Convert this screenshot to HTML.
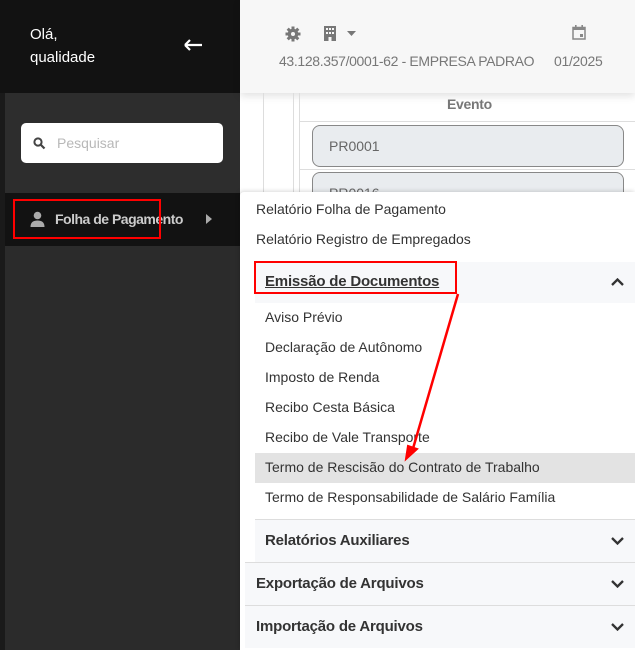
<!DOCTYPE html>
<html><head><meta charset="utf-8"><style>
*{margin:0;padding:0;box-sizing:border-box}
body{width:635px;height:650px;overflow:hidden;font-family:"Liberation Sans",sans-serif;background:#fff;position:relative}
.a{position:absolute}
.t{position:absolute;white-space:nowrap}
</style></head><body>
<div class="a" style="left:0;top:0;width:240px;height:650px;background:#1a1a1a"></div>
<div class="a" style="left:0;top:0;width:240px;height:93px;background:#121212"></div>
<div class="a" style="left:5px;top:93px;width:235px;height:100px;background:#2d2d2d"></div>
<div class="a" style="left:5px;top:193px;width:235px;height:53px;background:#121212"></div>
<div class="a" style="left:5px;top:246px;width:235px;height:404px;background:#2b2b2b"></div>
<div class="t" style="left:30px;top:23px;color:#fff;font-size:15px;line-height:23px">Olá,<br>qualidade</div>
<svg class="a" style="left:183px;top:38px" width="20" height="14" viewBox="0 0 20 14"><path d="M2 7H19M2 7L7 2M2 7L7 12" stroke="#fff" stroke-width="2.2" fill="none"/></svg>
<div class="a" style="left:21px;top:123px;width:202px;height:40px;background:#fff;border-radius:5px"></div>
<svg class="a" style="left:33px;top:137px" width="13" height="13" viewBox="0 0 13 13"><circle cx="5" cy="5" r="3.6" stroke="#444" stroke-width="2" fill="none"/><path d="M8 8L11.5 11.5" stroke="#444" stroke-width="2.2"/></svg>
<div class="t" style="left:57px;top:135px;color:#b8b8b8;font-size:14px">Pesquisar</div>
<svg class="a" style="left:30px;top:211px" width="15" height="16" viewBox="0 0 15 16"><circle cx="7.5" cy="4.5" r="3.8" fill="#aaa"/><path d="M0.5 16C0.5 11 3.5 9.5 7.5 9.5S14.5 11 14.5 16Z" fill="#aaa"/></svg>
<div class="t" style="left:55px;top:211px;color:#ccc;font-size:14px;font-weight:bold;letter-spacing:-0.5px">Folha de Pagamento</div>
<svg class="a" style="left:206px;top:214px" width="6" height="10"><path d="M0 0L6 5L0 10Z" fill="#aaa"/></svg>
<div class="a" style="left:13px;top:199px;width:148px;height:40px;border:2.5px solid #f00"></div>
<div class="a" style="left:240px;top:0;width:395px;height:93px;background:#f7f7f7;box-shadow:0 3px 8px rgba(0,0,0,.12)"></div>
<svg class="a" style="left:285px;top:26px" width="16" height="16" viewBox="0 0 16 16"><circle cx="8" cy="8" r="5.3" fill="#777"/><g stroke="#777" stroke-width="3"><path d="M8 0.5V15.5M0.5 8H15.5M2.7 2.7L13.3 13.3M13.3 2.7L2.7 13.3"/></g><circle cx="8" cy="8" r="2" fill="#f7f7f7"/></svg>
<svg class="a" style="left:324px;top:26px" width="12" height="15" viewBox="0 0 12 15"><rect x="0" y="0" width="12" height="15" fill="#777"/><g fill="#f7f7f7"><rect x="2" y="2" width="2" height="2"/><rect x="5" y="2" width="2" height="2"/><rect x="8" y="2" width="2" height="2"/><rect x="2" y="6" width="2" height="2"/><rect x="5" y="6" width="2" height="2"/><rect x="8" y="6" width="2" height="2"/><rect x="4.5" y="11" width="3" height="4"/></g></svg>
<svg class="a" style="left:347px;top:31px" width="9" height="5"><path d="M0 0H9L4.5 5Z" fill="#777"/></svg>
<svg class="a" style="left:572px;top:25px" width="14" height="15" viewBox="0 0 14 15"><rect x="1" y="2.5" width="12" height="11.5" fill="none" stroke="#888" stroke-width="1.5"/><rect x="1" y="2.5" width="12" height="2.5" fill="#888"/><rect x="3" y="0" width="1.6" height="3" fill="#888"/><rect x="9.4" y="0" width="1.6" height="3" fill="#888"/><rect x="8" y="9" width="3" height="3" fill="#888"/></svg>
<div class="t" style="left:279px;top:53px;color:#777;font-size:14px;letter-spacing:-0.35px">43.128.357/0001-62 - EMPRESA PADRAO</div>
<div class="t" style="left:554px;top:53px;color:#777;font-size:14px;letter-spacing:-0.3px">01/2025</div>
<div class="a" style="left:263px;top:93px;width:1px;height:100px;background:#ddd"></div>
<div class="a" style="left:293px;top:93px;width:1px;height:100px;background:#ddd"></div>
<div class="a" style="left:299px;top:93px;width:1px;height:100px;background:#ddd"></div>
<div class="t" style="left:447px;top:96px;color:#777;font-size:14px;font-weight:bold;letter-spacing:-0.3px">Evento</div>
<div class="a" style="left:300px;top:121px;width:335px;height:1px;background:#ddd"></div>
<div class="a" style="left:300px;top:169px;width:335px;height:1px;background:#ddd"></div>
<div class="a" style="left:312px;top:125px;width:312px;height:42px;background:#e9ecef;border:1px solid #888;border-radius:8px"></div>
<div class="t" style="left:329px;top:138px;color:#666;font-size:14px">PR0001</div>
<div class="a" style="left:312px;top:172px;width:312px;height:42px;background:#e9ecef;border:1px solid #888;border-radius:8px"></div>
<div class="t" style="left:329px;top:185px;color:#666;font-size:14px">PR0016</div>
<div class="a" style="left:240px;top:192px;width:395px;height:458px;background:#fff;border-radius:4px 0 0 0;box-shadow:-1px -1px 4px rgba(0,0,0,.15)"></div>
<div class="t" style="left:256px;top:201px;color:#333;font-size:14px">Relatório Folha de Pagamento</div>
<div class="t" style="left:256px;top:231px;color:#333;font-size:14px">Relatório Registro de Empregados</div>
<div class="a" style="left:255px;top:262px;width:380px;height:41px;background:#f7f8fa"></div>
<div class="t" style="left:265px;top:273px;color:#333;font-size:15px;font-weight:bold;text-decoration:underline;letter-spacing:-0.2px">Emissão de Documentos</div>
<svg class="a" style="left:611px;top:278px" width="13" height="8"><path d="M1 7L6.5 1.5L12 7" stroke="#333" stroke-width="2.3" fill="none"/></svg>
<div class="a" style="left:255px;top:453px;width:380px;height:30px;background:#e3e3e3"></div>
<div class="t" style="left:265px;top:302px;color:#333;font-size:14px;line-height:30px">Aviso Prévio<br>Declaração de Autônomo<br>Imposto de Renda<br>Recibo Cesta Básica<br>Recibo de Vale Transporte<br>Termo de Rescisão do Contrato de Trabalho<br>Termo de Responsabilidade de Salário Família</div>
<div class="a" style="left:255px;top:519px;width:380px;height:43px;background:#f7f8fa;border-top:1px solid #ddd"></div>
<div class="t" style="left:265px;top:532px;color:#333;font-size:15px;font-weight:bold;letter-spacing:-0.2px">Relatórios Auxiliares</div>
<div class="a" style="left:245px;top:562px;width:390px;height:43px;background:#f7f8fa;border-top:1px solid #ddd"></div>
<div class="t" style="left:256px;top:575px;color:#333;font-size:15px;font-weight:bold;letter-spacing:-0.2px">Exportação de Arquivos</div>
<div class="a" style="left:245px;top:605px;width:390px;height:43px;background:#f7f8fa;border-top:1px solid #ddd"></div>
<div class="t" style="left:256px;top:618px;color:#333;font-size:15px;font-weight:bold;letter-spacing:-0.2px">Importação de Arquivos</div>
<svg class="a" style="left:611px;top:537px" width="13" height="8"><path d="M1 1L6.5 6.5L12 1" stroke="#333" stroke-width="2.3" fill="none"/></svg>
<svg class="a" style="left:611px;top:580px" width="13" height="8"><path d="M1 1L6.5 6.5L12 1" stroke="#333" stroke-width="2.3" fill="none"/></svg>
<svg class="a" style="left:611px;top:623px" width="13" height="8"><path d="M1 1L6.5 6.5L12 1" stroke="#333" stroke-width="2.3" fill="none"/></svg>
<div class="a" style="left:254px;top:261px;width:203px;height:33px;border:2.5px solid #f00"></div>
<svg class="a" style="left:0;top:0" width="635" height="650"><path d="M458 294L412 452" stroke="#f00" stroke-width="2.5"/><path d="M406 459L408 446L417 449Z" fill="#f00" stroke="#f00" stroke-width="2"/></svg>
</body></html>
